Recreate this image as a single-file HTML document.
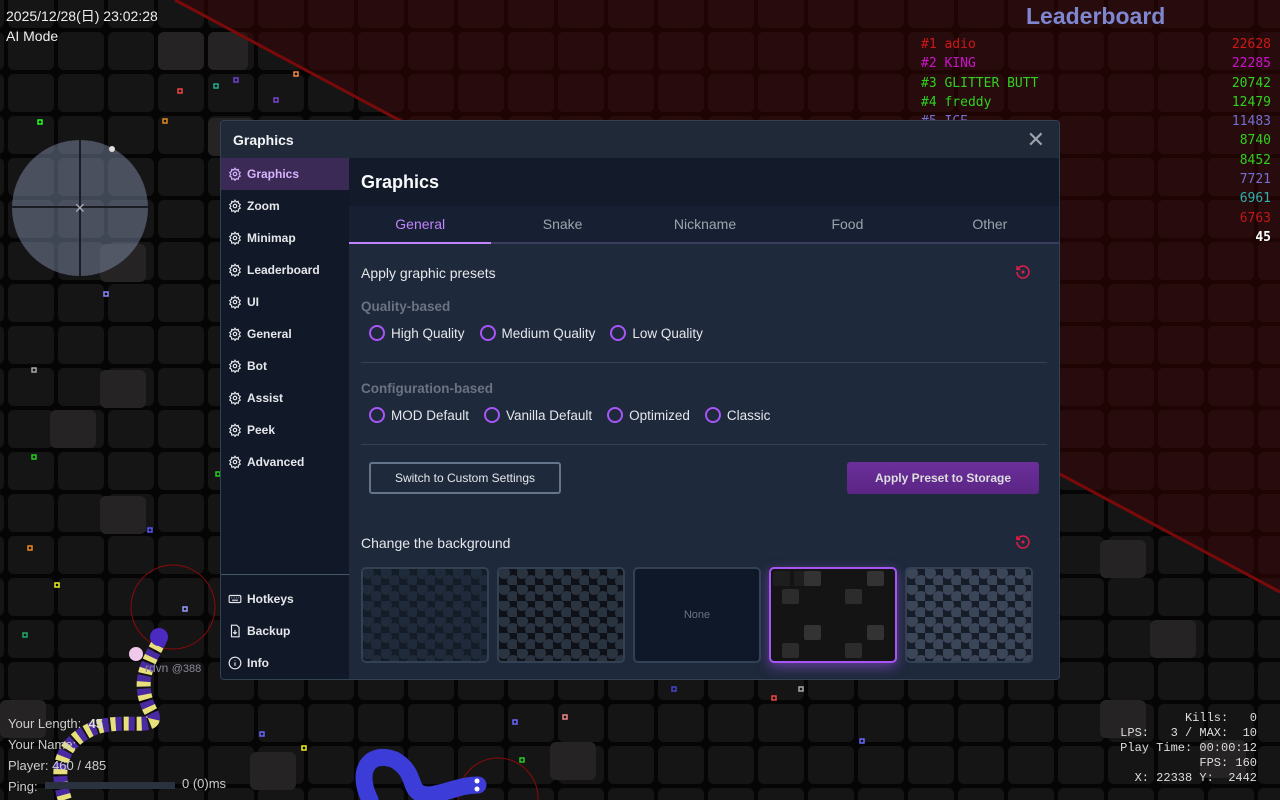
<!DOCTYPE html>
<html><head><meta charset="utf-8"><style>
*{margin:0;padding:0;box-sizing:border-box}
body{width:1280px;height:800px;overflow:hidden;background:#050505;font-family:"Liberation Sans","Noto Sans CJK JP",sans-serif;position:relative;color:#e5e7eb}
.abs{position:absolute}
.modal{left:220px;top:120px;width:840px;height:560px;background:#1e293b;border:1px solid #334155;border-radius:4px;overflow:hidden}
.mh{height:37px;background:#1f2937;font-weight:bold;font-size:14px;padding:11px 12px;color:#f3f4f6}
.side{left:0;top:37px;width:128px;height:523px;background:#111827}
.si{height:32px;display:flex;align-items:center;padding-left:7px;font-size:12px;font-weight:bold;color:#e5e7eb}
.si svg{margin-right:5px}
.si.act{background:#3b2a55;color:#d8b4fe}
.ch{left:128px;top:37px;width:712px;height:48px;background:#131b2b;font-size:18px;font-weight:bold;padding:14px 12px;color:#f9fafb}
.tabs{left:128px;top:85px;width:712px;height:38px;background:#172032;border-bottom:2px solid #3b3d5c;display:flex}
.tab{flex:1;text-align:center;font-size:14px;color:#9ca3af;padding-top:10px}
.tab.a{color:#c084fc;border-bottom:2px solid #c084fc;margin-bottom:-2px}
.lbl{font-size:14px;color:#e5e7eb}
.sub{font-size:13.5px;font-weight:bold;color:#6b7280}
.r{display:inline-flex;align-items:center;font-size:13.5px;margin-right:15px;color:#e5e7eb}
.r i{width:16px;height:16px;border:2px solid #a855f7;border-radius:50%;margin-right:6px;display:inline-block}
.hr{height:1px;background:#334155}
.thumb{width:128px;height:96px;border:2px solid #334155;border-radius:5px;top:446px;overflow:hidden}
.lb{font-family:"DejaVu Sans Mono","Liberation Mono",monospace;font-size:13px}
.st{font-family:"Liberation Mono",monospace;font-size:12px;color:#ddd;text-align:right;white-space:pre;line-height:15px}
</style></head><body>
<svg class="abs" style="left:0;top:0" width="1280" height="800">
<defs>
<pattern id="g" x="8" y="-10" width="50" height="42" patternUnits="userSpaceOnUse"><rect x="0" y="0" width="46" height="38" rx="6" fill="#161516"/></pattern>
<pattern id="h" x="0" y="0" width="18" height="16" patternUnits="userSpaceOnUse"><circle cx="5" cy="4" r="6" fill="#1f2b3b"/><circle cx="14" cy="12" r="6" fill="#1f2b3b"/></pattern>
<pattern id="h2" x="0" y="0" width="18" height="16" patternUnits="userSpaceOnUse"><circle cx="5" cy="4" r="6" fill="#2a3340"/><circle cx="14" cy="12" r="6" fill="#2a3340"/></pattern>
<pattern id="h3" x="0" y="0" width="18" height="16" patternUnits="userSpaceOnUse"><circle cx="5" cy="4" r="6" fill="#3b4658"/><circle cx="14" cy="12" r="6" fill="#3b4658"/></pattern>
</defs>
<rect width="1280" height="800" fill="url(#g)"/>
<g fill="#252324">
<rect x="158" y="32" width="46" height="38" rx="6"/><rect x="208" y="32" width="40" height="38" rx="6"/><rect x="100" y="370" width="46" height="38" rx="6"/><rect x="100" y="496" width="46" height="38" rx="6"/><rect x="50" y="410" width="46" height="38" rx="6"/><rect x="208" y="118" width="46" height="38" rx="6"/><rect x="250" y="752" width="46" height="38" rx="6"/><rect x="100" y="244" width="46" height="38" rx="6"/><rect x="1100" y="700" width="46" height="38" rx="6"/><rect x="1200" y="740" width="46" height="38" rx="6"/><rect x="550" y="742" width="46" height="38" rx="6"/><rect x="1100" y="540" width="46" height="38" rx="6"/><rect x="1150" y="620" width="46" height="38" rx="6"/><rect x="0" y="700" width="46" height="38" rx="6"/>
</g>
<polygon points="175,0 1280,0 1280,592" fill="#3a0404" opacity="0.5"/>
<line x1="175" y1="0" x2="1280" y2="592" stroke="#7a0a0a" stroke-width="3"/>
<circle cx="80" cy="208" r="68" fill="#8a9ab5" opacity="0.45"/>
<line x1="80" y1="140" x2="80" y2="276" stroke="#1a1d24" stroke-width="2"/>
<line x1="12" y1="207" x2="148" y2="207" stroke="#1a1d24" stroke-width="2"/>
<text x="74" y="213" fill="#aab" font-size="14">✕</text>
<circle cx="112" cy="149" r="3" fill="#ddd"/>
<circle cx="173" cy="607" r="42" fill="none" stroke="#8b0a0a"/>
<circle cx="498" cy="798" r="40" fill="none" stroke="#8b0a0a"/>
<g fill="none" stroke-width="1.5">
<rect x="38" y="120" width="4" height="4" stroke="#2f2"/><rect x="178" y="89" width="4" height="4" stroke="#e44"/><rect x="214" y="84" width="4" height="4" stroke="#2a8"/><rect x="234" y="78" width="4" height="4" stroke="#64c"/><rect x="294" y="72" width="4" height="4" stroke="#e84"/><rect x="274" y="98" width="4" height="4" stroke="#74c"/><rect x="163" y="119" width="4" height="4" stroke="#d82"/><rect x="104" y="292" width="4" height="4" stroke="#88f"/><rect x="32" y="368" width="4" height="4" stroke="#aaa"/><rect x="32" y="455" width="4" height="4" stroke="#2c2"/><rect x="216" y="472" width="4" height="4" stroke="#2c2"/><rect x="148" y="528" width="4" height="4" stroke="#55f"/><rect x="28" y="546" width="4" height="4" stroke="#e82"/><rect x="55" y="583" width="4" height="4" stroke="#ee2"/><rect x="183" y="607" width="4" height="4" stroke="#99f"/><rect x="23" y="633" width="4" height="4" stroke="#2a6"/><rect x="260" y="732" width="4" height="4" stroke="#66f"/><rect x="302" y="746" width="4" height="4" stroke="#ee2"/><rect x="513" y="720" width="4" height="4" stroke="#66f"/><rect x="563" y="715" width="4" height="4" stroke="#e88"/><rect x="520" y="758" width="4" height="4" stroke="#2c2"/><rect x="672" y="687" width="4" height="4" stroke="#44c"/><rect x="772" y="696" width="4" height="4" stroke="#e44"/><rect x="799" y="687" width="4" height="4" stroke="#aaa"/><rect x="860" y="739" width="4" height="4" stroke="#66f"/>
</g>
<path d="M160 640 C150 660 135 680 150 710 C165 735 120 715 90 730 C60 745 55 770 65 800" fill="none" stroke="#4a2aa0" stroke-width="14" stroke-dasharray="7 6"/>
<path d="M160 640 C150 660 135 680 150 710 C165 735 120 715 90 730 C60 745 55 770 65 800" fill="none" stroke="#e8e07a" stroke-width="14" stroke-dasharray="5 8" stroke-dashoffset="7"/>
<circle cx="159" cy="637" r="9" fill="#4a2ac0"/><circle cx="136" cy="654" r="7" fill="#f0c8ea"/>
<path d="M370 800 C355 770 370 750 395 760 C420 775 405 795 430 795 C450 792 460 785 478 785" fill="none" stroke="#3c3cd8" stroke-width="17" stroke-linecap="round"/>
<circle cx="477" cy="781" r="2.5" fill="#fff"/><circle cx="477" cy="789" r="2.5" fill="#fff"/>
<rect x="45" y="782" width="130" height="7" fill="#2a3240"/>
</svg>
<div class="abs" style="left:6px;top:6px;font-size:14px;color:#eee;line-height:20px">2025/12/28(日) 23:02:28<br>AI Mode</div>
<div class="abs" style="left:8px;top:713px;font-size:13px;color:#ccc;line-height:21px">Your Length:&nbsp; <b style="color:#ddd">45</b><br>Your Name:<br>Player: 460 / 485<br>Ping:</div>
<div class="abs" style="left:182px;top:776px;font-size:13px;color:#ccc">0 (0)ms</div>
<div class="abs" style="left:145px;top:661px;font-size:12px;color:#889">rdvn <span style="font-size:11px">@388</span></div>
<div class="abs" style="left:1026px;top:3px;font-size:23px;font-weight:bold;color:#7f86d0">Leaderboard</div>
<div class="abs lb" style="left:921px;top:35px;line-height:19.3px;width:350px">
<div style="color:#d01818">#1 adio<span style="float:right">22628</span></div>
<div style="color:#d010d0">#2 KING<span style="float:right">22285</span></div>
<div style="color:#30d020">#3 GLITTER BUTT<span style="float:right">20742</span></div>
<div style="color:#30d020">#4 freddy<span style="float:right">12479</span></div>
<div style="color:#7070d0">#5 ICE<span style="float:right">11483</span></div>
<div style="color:#30d020"><span style="float:right">8740</span>&nbsp;</div>
<div style="color:#30d020"><span style="float:right">8452</span>&nbsp;</div>
<div style="color:#7070d0"><span style="float:right">7721</span>&nbsp;</div>
<div style="color:#30b0b0"><span style="float:right">6961</span>&nbsp;</div>
<div style="color:#c01818"><span style="float:right">6763</span>&nbsp;</div>
<div style="color:#fff;font-weight:bold"><span style="float:right">45</span>&nbsp;</div>
</div>
<div class="abs st" style="right:23px;top:711px">Kills:   0
LPS:   3 / MAX:  10
Play Time: 00:00:12
FPS: 160
X: 22338 Y:  2442</div>

<div class="abs modal">
<div class="mh">Graphics</div>
<div class="abs" style="right:14px;top:6px;font-size:22px;color:#9ca3af">✕</div>
<div class="abs side">
<div class="si act"><svg width="14" height="14" viewBox="0 0 24 24" fill="none" stroke="currentColor" stroke-width="2"><circle cx="12" cy="12" r="3"/><path d="M12 2l2 3 3.5-1 .5 3.5 3 2-2 3 2 3-3 2-.5 3.5-3.5-1-2 3-2-3-3.5 1-.5-3.5-3-2 2-3-2-3 3-2 .5-3.5 3.5 1z"/></svg>Graphics</div>
<div class="si"><svg width="14" height="14" viewBox="0 0 24 24" fill="none" stroke="currentColor" stroke-width="2"><circle cx="12" cy="12" r="3"/><path d="M12 2l2 3 3.5-1 .5 3.5 3 2-2 3 2 3-3 2-.5 3.5-3.5-1-2 3-2-3-3.5 1-.5-3.5-3-2 2-3-2-3 3-2 .5-3.5 3.5 1z"/></svg>Zoom</div>
<div class="si"><svg width="14" height="14" viewBox="0 0 24 24" fill="none" stroke="currentColor" stroke-width="2"><circle cx="12" cy="12" r="3"/><path d="M12 2l2 3 3.5-1 .5 3.5 3 2-2 3 2 3-3 2-.5 3.5-3.5-1-2 3-2-3-3.5 1-.5-3.5-3-2 2-3-2-3 3-2 .5-3.5 3.5 1z"/></svg>Minimap</div>
<div class="si"><svg width="14" height="14" viewBox="0 0 24 24" fill="none" stroke="currentColor" stroke-width="2"><circle cx="12" cy="12" r="3"/><path d="M12 2l2 3 3.5-1 .5 3.5 3 2-2 3 2 3-3 2-.5 3.5-3.5-1-2 3-2-3-3.5 1-.5-3.5-3-2 2-3-2-3 3-2 .5-3.5 3.5 1z"/></svg>Leaderboard</div>
<div class="si"><svg width="14" height="14" viewBox="0 0 24 24" fill="none" stroke="currentColor" stroke-width="2"><circle cx="12" cy="12" r="3"/><path d="M12 2l2 3 3.5-1 .5 3.5 3 2-2 3 2 3-3 2-.5 3.5-3.5-1-2 3-2-3-3.5 1-.5-3.5-3-2 2-3-2-3 3-2 .5-3.5 3.5 1z"/></svg>UI</div>
<div class="si"><svg width="14" height="14" viewBox="0 0 24 24" fill="none" stroke="currentColor" stroke-width="2"><circle cx="12" cy="12" r="3"/><path d="M12 2l2 3 3.5-1 .5 3.5 3 2-2 3 2 3-3 2-.5 3.5-3.5-1-2 3-2-3-3.5 1-.5-3.5-3-2 2-3-2-3 3-2 .5-3.5 3.5 1z"/></svg>General</div>
<div class="si"><svg width="14" height="14" viewBox="0 0 24 24" fill="none" stroke="currentColor" stroke-width="2"><circle cx="12" cy="12" r="3"/><path d="M12 2l2 3 3.5-1 .5 3.5 3 2-2 3 2 3-3 2-.5 3.5-3.5-1-2 3-2-3-3.5 1-.5-3.5-3-2 2-3-2-3 3-2 .5-3.5 3.5 1z"/></svg>Bot</div>
<div class="si"><svg width="14" height="14" viewBox="0 0 24 24" fill="none" stroke="currentColor" stroke-width="2"><circle cx="12" cy="12" r="3"/><path d="M12 2l2 3 3.5-1 .5 3.5 3 2-2 3 2 3-3 2-.5 3.5-3.5-1-2 3-2-3-3.5 1-.5-3.5-3-2 2-3-2-3 3-2 .5-3.5 3.5 1z"/></svg>Assist</div>
<div class="si"><svg width="14" height="14" viewBox="0 0 24 24" fill="none" stroke="currentColor" stroke-width="2"><circle cx="12" cy="12" r="3"/><path d="M12 2l2 3 3.5-1 .5 3.5 3 2-2 3 2 3-3 2-.5 3.5-3.5-1-2 3-2-3-3.5 1-.5-3.5-3-2 2-3-2-3 3-2 .5-3.5 3.5 1z"/></svg>Peek</div>
<div class="si"><svg width="14" height="14" viewBox="0 0 24 24" fill="none" stroke="currentColor" stroke-width="2"><circle cx="12" cy="12" r="3"/><path d="M12 2l2 3 3.5-1 .5 3.5 3 2-2 3 2 3-3 2-.5 3.5-3.5-1-2 3-2-3-3.5 1-.5-3.5-3-2 2-3-2-3 3-2 .5-3.5 3.5 1z"/></svg>Advanced</div>
<div class="abs" style="left:0;top:416px;width:128px;border-top:1px solid #475569">
<div class="si" style="margin-top:8px"><svg width="14" height="14" viewBox="0 0 24 24" fill="none" stroke="currentColor" stroke-width="2"><rect x="2" y="6" width="20" height="12" rx="2"/><path d="M6 10h1M10 10h1M14 10h1M18 10h1M7 14h10"/></svg>Hotkeys</div>
<div class="si"><svg width="14" height="14" viewBox="0 0 24 24" fill="none" stroke="currentColor" stroke-width="2"><path d="M6 2h9l4 4v16H6z"/><path d="M12 10v7M9 14l3 3 3-3"/></svg>Backup</div>
<div class="si"><svg width="14" height="14" viewBox="0 0 24 24" fill="none" stroke="currentColor" stroke-width="2"><circle cx="12" cy="12" r="10"/><path d="M12 11v6M12 7v1"/></svg>Info</div>
</div>
</div>
<div class="abs ch">Graphics</div>
<div class="abs tabs"><div class="tab a">General</div><div class="tab">Snake</div><div class="tab">Nickname</div><div class="tab">Food</div><div class="tab">Other</div></div>
<div class="abs" style="left:140px;top:123px;width:686px">
<div class="lbl" style="margin-top:21px">Apply graphic presets</div>
<div class="sub" style="margin-top:18px">Quality-based</div>
<div style="margin-top:11px;padding-left:8px"><span class="r"><i></i>High Quality</span><span class="r"><i></i>Medium Quality</span><span class="r"><i></i>Low Quality</span></div>
<div class="hr" style="margin-top:16px"></div>
<div class="sub" style="margin-top:18px">Configuration-based</div>
<div style="margin-top:11px;padding-left:8px"><span class="r"><i></i>MOD Default</span><span class="r"><i></i>Vanilla Default</span><span class="r"><i></i>Optimized</span><span class="r"><i></i>Classic</span></div>
<div class="hr" style="margin-top:16px"></div>
</div>
<svg class="abs" style="left:793px;top:142px" width="18" height="18" viewBox="0 0 24 24" fill="none" stroke="#e11d48" stroke-width="2"><path d="M4 12a8 8 0 1 0 2.5-5.8L4 8.5"/><path d="M4 4v4.5h4.5"/><circle cx="12" cy="12" r="1" fill="#e11d48"/></svg>
<svg class="abs" style="left:793px;top:412px" width="18" height="18" viewBox="0 0 24 24" fill="none" stroke="#e11d48" stroke-width="2"><path d="M4 12a8 8 0 1 0 2.5-5.8L4 8.5"/><path d="M4 4v4.5h4.5"/><circle cx="12" cy="12" r="1" fill="#e11d48"/></svg>
<div class="abs" style="left:148px;top:341px;width:192px;height:32px;border:2px solid #64748b;border-radius:3px;font-size:12px;text-align:center;line-height:28px;color:#e5e7eb">Switch to Custom Settings</div>
<div class="abs" style="left:626px;top:341px;width:192px;height:32px;background:linear-gradient(#6b2f9a,#5b2585);border-radius:3px;font-size:12px;font-weight:bold;text-align:center;line-height:32px;color:#ddd">Apply Preset to Storage</div>
<div class="abs lbl" style="left:140px;top:414px">Change the background</div>
<div class="abs thumb" style="left:140px;background:#141c28"><svg width="128" height="96"><rect width="128" height="96" fill="url(#h)"/></svg></div>
<div class="abs thumb" style="left:276px;background:#0e1117"><svg width="128" height="96"><rect width="128" height="96" fill="url(#h2)"/></svg></div>
<div class="abs thumb" style="left:412px;background:#0f1828;font-size:11px;color:#6b7280;text-align:center;line-height:92px">None</div>
<div class="abs thumb" style="left:548px;border-color:#a855f7;background:#141414;box-shadow:0 4px 12px #a855f780"><svg width="124" height="92"><g fill="#1e1e1e"><rect x="2" y="2" width="17" height="15" rx="2"/><rect x="23" y="2" width="17" height="15" rx="2"/><rect x="33" y="2" width="17" height="15" rx="2" fill="#333"/><rect x="96" y="2" width="17" height="15" rx="2" fill="#333"/><rect x="11" y="20" width="17" height="15" rx="2" fill="#2c2c2c"/><rect x="74" y="20" width="17" height="15" rx="2" fill="#2c2c2c"/><rect x="33" y="56" width="17" height="15" rx="2" fill="#333"/><rect x="96" y="56" width="17" height="15" rx="2" fill="#333"/><rect x="11" y="74" width="17" height="15" rx="2" fill="#2c2c2c"/><rect x="74" y="74" width="17" height="15" rx="2" fill="#2c2c2c"/></g></svg></div>
<div class="abs thumb" style="left:684px;background:#161d28"><svg width="128" height="96"><rect width="128" height="96" fill="url(#h3)"/></svg></div>
</div>
</body></html>
